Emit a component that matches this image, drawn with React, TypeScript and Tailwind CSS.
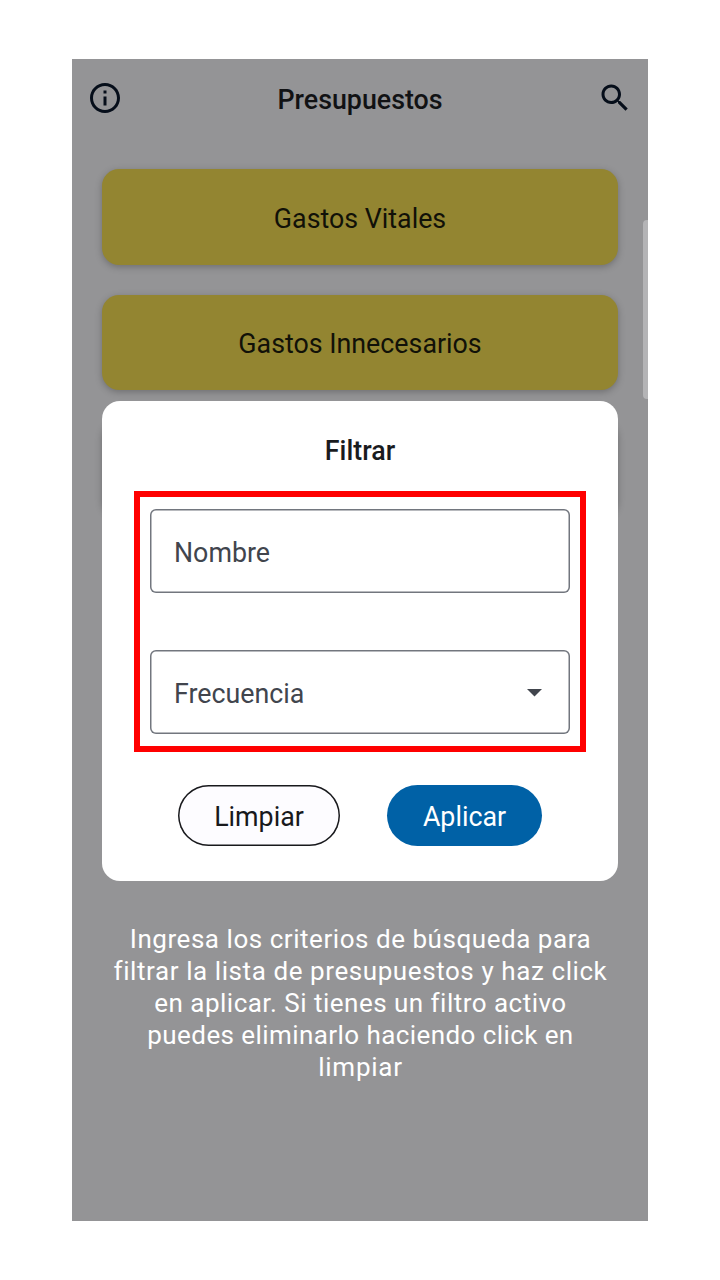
import React from "react";

function InfoIcon() {
  return (
    <svg viewBox="0 0 24 24" className="mb-[2px] size-[36px] fill-[#060e1a]">
      <path d="M11 7h2v2h-2zm0 4h2v6h-2zm1-9C6.48 2 2 6.48 2 12s4.48 10 10 10 10-4.48 10-10S17.52 2 12 2zm0 18c-4.41 0-8-3.59-8-8s3.59-8 8-8 8 3.59 8 8-3.59 8-8 8z" />
    </svg>
  );
}

function SearchIcon() {
  return (
    <svg viewBox="0 0 24 24" className="mb-[2px] size-[36px] fill-[#060e1a]">
      <path d="M15.5 14h-.79l-.28-.27C15.41 12.59 16 11.11 16 9.5 16 5.91 13.09 3 9.5 3S3 5.91 3 9.5 5.91 16 9.5 16c1.61 0 3.09-.59 4.23-1.57l.27.28v.79l5 4.99L20.49 19l-4.99-5zm-6 0C7.01 14 5 11.99 5 9.5S7.01 5 9.5 5 14 7.01 14 9.5 11.99 14 9.5 14z" />
    </svg>
  );
}

function BudgetCard({ name }: { name: string }) {
  return (
    <div className="flex h-[95.5px] items-center justify-center rounded-[17px] bg-[#938531] pt-[4px] text-[26.8px] text-[#111108] shadow-[0_2px_7px_rgba(0,0,0,0.25)]">
      {name}
    </div>
  );
}

function Field({ label, select }: { label: string; select?: boolean }) {
  return (
    <div className="flex h-[84px] items-center justify-between rounded-[6px] pr-[28px] pl-[24px] text-[26.8px] text-[#41454d] shadow-[inset_0_0_0_1.5px_#72767e]">
      <span className="pt-[4px]">{label}</span>
      {select && (
        <svg viewBox="0 0 15 8" className="mt-[2px] h-2 w-[15px] fill-[#41454d]">
          <path d="M0 0h15L7.5 7.6z" />
        </svg>
      )}
    </div>
  );
}

function FilterDialog() {
  return (
    <section className="flex h-[480px] w-[516px] flex-col items-center rounded-[18px] bg-white">
      <h2 className="mt-[34px] h-8 text-[26.8px] leading-8 font-medium text-[#191b1e]">Filtrar</h2>
      <div className="mt-[24px] flex h-[261px] w-[452px] flex-col gap-[57.4px] border-6 border-[#ff0000] px-[10px] pt-3">
        <Field label="Nombre" />
        <Field label="Frecuencia" select />
      </div>
      <div className="mt-[33px] flex gap-[47px] text-[26.8px]">
        <button className="h-[61px] w-[162px] rounded-full bg-[#fdfcff] pt-[4px] text-[#18191c] shadow-[inset_0_0_0_1.5px_#18191c]">Limpiar</button>
        <button className="h-[61px] w-[155px] rounded-full bg-[#0061a6] pt-[4px] text-white">Aplicar</button>
      </div>
    </section>
  );
}

function Caption() {
  return (
    <p className="flex flex-col items-center pl-[1px] text-[26px] leading-8 font-[450] whitespace-nowrap text-white">
      <span className="tracking-[0.54px]">Ingresa los criterios de búsqueda para</span>
      <span className="tracking-[0.58px]">filtrar la lista de presupuestos y haz click</span>
      <span className="tracking-[0.48px]">en aplicar. Si tienes un filtro activo</span>
      <span className="tracking-[0.42px]">puedes eliminarlo haciendo click en</span>
      <span className="tracking-[0.75px]">limpiar</span>
    </p>
  );
}

export default function App() {
  return (
    <div className="h-[1280px] w-[720px] bg-white px-[72px] pt-[59px] font-['Roboto',sans-serif]">
      <main className="relative h-[1162px] bg-[#949496]">
        <header className="flex h-[80px] items-center justify-between px-[15px]">
          <InfoIcon />
          <h1 className="pt-[3px] text-[26.8px] font-medium text-[#111214]">Presupuestos</h1>
          <SearchIcon />
        </header>
        <div className="flex flex-col gap-[30px] px-[30px] pt-[30px]">
          <BudgetCard name="Gastos Vitales" />
          <BudgetCard name="Gastos Innecesarios" />
          <div className="h-24 rounded-[17px] bg-[#938531] shadow-[0_2px_7px_rgba(0,0,0,0.25)]" />
        </div>
        <div className="absolute top-[161px] right-0 h-[179px] w-[5.5px] rounded-l-[4px] bg-[#b4b4b6]" />
        <div className="absolute inset-x-0 top-[342px] flex flex-col items-center gap-[42px]">
          <FilterDialog />
          <Caption />
        </div>
      </main>
    </div>
  );
}
